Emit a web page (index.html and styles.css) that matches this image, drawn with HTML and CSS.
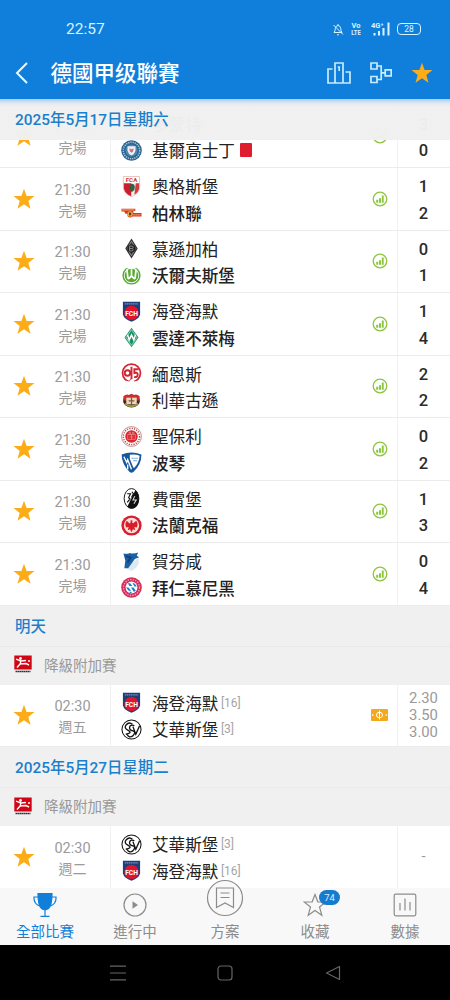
FILE: index.html
```html
<!DOCTYPE html>
<html lang="zh-Hant">

<head>
	<meta charset="UTF-8" />
	<meta name="viewport" content="width=device-width, initial-scale=1.0" />
	<title>德國甲级聯賽</title>
	<link rel="stylesheet" href="styles.css">
</head>

<body>
	<!-- shared icons and crests -->
	<svg class="sprite" aria-hidden="true">
		<symbol id="star" viewBox="0 0 22 22">
			<path d="M11 .8l2.600 7.100 7.900.1-6.200 4.900 2.200 7.900L11 16.200l-6.500 4.600 2.200-7.900L.5 8l7.900-.1z" />
		</symbol>
		<symbol id="stats" viewBox="0 0 16 16">
			<circle cx="8" cy="8" r="6.800" fill="none" stroke="#8cc63f" stroke-width="1.300" />
			<path d="M4.200 8.800h2v3h-2zM7 7.300h2v4.500H7zM9.800 4.400h1.900v7.400H9.800z" fill="#8cc63f" />
		</symbol>
		<symbol id="kiel" viewBox="0 0 22 22">
			<circle cx="11" cy="11" r="10.800" fill="#2b6591" />
			<circle cx="11" cy="11" r="8.600" fill="none" stroke="#a9c8dc" stroke-width="1.600" stroke-dasharray="1.300 1" />
			<circle cx="11" cy="11" r="6.400" fill="#4b86ae" />
			<path d="M6.800 6.600h8.400v4.600q-.8 3.400-4.200 5-3.400-1.600-4.200-5z" fill="#eef0f6" />
			<path d="M8.600 8.600l2.400 1 2.400-1-.8 3.400-1.600 1.400-1.600-1.400z" fill="#d4707f" />
		</symbol>
		<symbol id="dortmund" viewBox="0 0 22 22">
			<circle cx="11" cy="11" r="10" fill="#fde100" />
			<circle cx="11" cy="11" r="6.500" fill="none" stroke="#222" stroke-width="1.200" />
		</symbol>
		<symbol id="augsburg" viewBox="0 0 22 22">
			<path d="M2.500.5h17V13q-1 6-8.500 8.700Q3.500 19 2.500 13z" fill="#fff" stroke="#d8aaa4" stroke-width=".7" />
			<path d="M3 7.500h8V21.300Q4 18.500 3 13z" fill="#c8202d" />
			<path d="M11 7.500h8V13q-1 5.500-8 8.300z" fill="#f3eeee" />
			<path d="M15.500 7.500H19V13q-.8 4-5 6.500z" fill="#d63a3e" />
			<path d="M11 8q3.500 0 3.500 3.500T12.500 16q-1 .8-3 .4l1-2q-3-1-2-4z" fill="#356042" />
			<text x="11" y="6.300" class="crest-text" font-size="6.500" fill="#d5382f">FCA</text>
		</symbol>
		<symbol id="union" viewBox="0 0 22 22">
			<path d="M.5 7.200h14.500v2.300H13v2h8.500v3.800H12q-2.500 2-5 0l-.5-3H4.500L3.500 10H.5z" fill="#d9371f" />
			<path d="M1 8.300h13" stroke="#e9c46b" stroke-width="1" />
			<circle cx="9.500" cy="12.500" r="2.800" fill="#e6b340" />
			<path d="M8.300 11h2.400v3H8.300z" fill="#6b331b" />
			<path d="M13 13.500h7.500" stroke="#f4c2a5" stroke-width="1" stroke-dasharray="1.500 .6" />
		</symbol>
		<symbol id="gladbach" viewBox="0 0 22 22">
			<path d="M11 .5L17.500 11 11 21.500 4.500 11z" fill="#333" />
			<path d="M11 3.500L15.400 11 11 18.500 6.600 11z" fill="none" stroke="#aaa" stroke-width=".8" />
			<circle cx="11" cy="11" r="4.300" fill="#222" />
			<path d="M9 8.500h3q1.700 1.200 0 2.500 1.700 1.300 0 2.500H9zM9 11h3" fill="none" stroke="#999" stroke-width=".9" />
		</symbol>
		<symbol id="wolfsburg" viewBox="0 0 22 22">
			<circle cx="11" cy="11" r="8.800" fill="#fff" stroke="#58aa35" stroke-width="1.500" />
			<circle cx="11" cy="11" r="7.200" fill="#58aa35" />
			<path d="M6.200 4.500l1 9q.4 1.700 1.800 0l2-2 2 2q1.400 1.700 1.800 0l1-9M11 4.500V11" fill="none" stroke="#fff" stroke-width="1.800" />
			<path d="M6.500 1h9v2.700h-9z" fill="#fff" />
		</symbol>
		<symbol id="heidenheim" viewBox="0 0 22 22">
			<path d="M2 .7h18V14q-1 5-9 7.800Q3 19 2 14z" fill="#1c3f7c" />
			<path d="M4 3h14" stroke="#7893bb" stroke-width="1.200" stroke-dasharray="1.600 .6" />
			<circle cx="11" cy="12.500" r="7.500" fill="#e3122f" />
			<text x="11" y="15.200" class="crest-text" font-size="7" fill="#fff">FCH</text>
		</symbol>
		<symbol id="bremen" viewBox="0 0 22 22">
			<path d="M11 .7L18.300 11 11 21.300 3.700 11z" fill="#189064" />
			<path d="M11 2.800L16.700 11 11 19.200 5.300 11z" fill="none" stroke="#d6efe4" stroke-width=".7" />
			<path d="M6.800 8l1.800 5.500L11 8.500l2.400 5L15.200 8" fill="none" stroke="#fff" stroke-width="1.600" />
		</symbol>
		<symbol id="mainz" viewBox="0 0 22 22">
			<circle cx="11" cy="10.500" r="9.400" fill="#fff" stroke="#d32432" stroke-width="1.800" />
			<circle cx="6.800" cy="10.500" r="2.900" fill="none" stroke="#d32432" stroke-width="2" />
			<path d="M11 4v12.500l-2.500 4M18.500 6.500H14v4q3.500-1.200 3.500 1.700t-3.800 2.600" fill="none" stroke="#d32432" stroke-width="2" />
			<path d="M5.500 18.500l3 1 2-2.500h1.500l2 2.500 3-1 2 3.500H3z" fill="#fff" />
		</symbol>
		<symbol id="leverkusen" viewBox="0 0 22 22">
			<ellipse cx="11" cy="11.500" rx="8.800" ry="6.800" fill="#3b2620" />
			<path d="M2.500 6.500Q6 3.500 8.500 5.500L11 4l2.500 1.500q2.500-2 6 1v4.500h-17z" fill="#d32a2b" />
			<path d="M5.500 8h11v7h-11z" fill="#e8d9bd" />
			<path d="M11 7.500v7.500M8 11.500h6" stroke="#8c5138" stroke-width="1.300" />
			<path d="M4 14.500q7 5 14 0" fill="none" stroke="#9d9a44" stroke-width="2" />
		</symbol>
		<symbol id="stpauli" viewBox="0 0 22 22">
			<circle cx="11" cy="11" r="10.400" fill="#fff" stroke="#bc6963" stroke-width=".8" />
			<circle cx="11" cy="11" r="8.500" fill="none" stroke="#a54541" stroke-width="1.500" stroke-dasharray="1.200 1.300" />
			<circle cx="11" cy="11" r="6.500" fill="#da252c" />
			<path d="M7 9h8v5H7zM8.500 9V6.500h1.500V9M12 9V6.500h1.500V9M9 11.500h4M11 9v5" fill="none" stroke="#f3a5a5" stroke-width=".6" />
		</symbol>
		<symbol id="bochum" viewBox="0 0 22 22">
			<path d="M.7 2.500Q11-1.500 21.300 2.500q.5 10-8.300 18.500-2 1.300-4 0Q.5 12.500.7 2.500z" fill="#19579c" />
			<path d="M9.200 3q6-.8 10.300.8-.3 7-5.500 12.700h-1L9.200 7z" fill="#fff" />
			<path d="M3 5l3 6 1-3 4 10M7 13v5" fill="none" stroke="#fff" stroke-width="1.400" />
			<path d="M11 6.500h7M13 9h3.500" stroke="#6e9bc9" stroke-width="1.200" stroke-dasharray="1.500 .5" />
		</symbol>
		<symbol id="freiburg" viewBox="0 0 22 22">
			<ellipse cx="11" cy="11" rx="7.700" ry="10.400" fill="#fff" stroke="#111" stroke-width="1" />
			<path d="M15 2.300q3.700 3 3.700 8.700 0 10.500-7.700 10.500-2.500 0-4.300-2z" fill="#111" />
			<path d="M6.500 6H10l-2 4 1.500 1.500L6.500 15M11.500 4l1.500 2-2 4" fill="none" stroke="#111" stroke-width="1.200" />
			<path d="M14.500 8.500l-2 4h3.500l-2.500 4" fill="none" stroke="#ddd" stroke-width="1.100" />
		</symbol>
		<symbol id="frankfurt" viewBox="0 0 22 22">
			<circle cx="11" cy="11" r="10.600" fill="#d71e2b" />
			<circle cx="11" cy="11" r="8" fill="#fbdede" />
			<path d="M10 5.500l2 .3-.3 2 1.100.9L16 6q2.500 4 .5 7L14 12.500l1 3.500-2.500-1-1.500 3-1.500-3L7 16l1-3.500-2.500.5Q3.500 10 6 6l3 3 1-1z" fill="#d71e2b" />
		</symbol>
		<symbol id="hoffenheim" viewBox="0 0 22 22">
			<path d="M18.500 7v6q-2 5-7.500 8-4-1.500-5.500-4z" fill="#dce8f2" />
			<path d="M2.500 2.500q4 1 6.500-.5 4 1.500 9-.5l-1.500 3.500 2.500 1.500-4.500 2-7 9.500H3.500L4.500 10z" fill="#1961a5" />
			<path d="M5 5.500l5 1.500-3 5" fill="none" stroke="#11427b" stroke-width="2" />
		</symbol>
		<symbol id="bayern" viewBox="0 0 22 22">
			<circle cx="11" cy="11" r="10.800" fill="#d52b58" />
			<circle cx="11" cy="11" r="8.400" fill="none" stroke="#f0a0b7" stroke-width="1.400" stroke-dasharray="1.500 1.200" />
			<circle cx="11" cy="11" r="6.200" fill="#fff" />
			<path d="M7 6.500h2.500l2.500 3H9zM12 6l2.500 1 2 3h-2.500zM5.200 11h2.500l3 3.500H8zM10.500 11H13l2.500 3.200-2 1.500zM8.500 15.500h2l1 1.300-2-.1z" fill="#197fc6" />
		</symbol>
		<symbol id="elversberg" viewBox="0 0 22 22">
			<circle cx="11" cy="11" r="10" fill="#fff" stroke="#111" stroke-width="1.100" />
			<path d="M12 5.500Q8.500 2.500 5.500 6t2 6-2.500 4M14 7Q9.500 5.500 9 8.500t3.500 4-.5 5.500Q8.500 20 6.500 16.500M12.500 8l3 8L19.500 7" fill="none" stroke="#111" stroke-width="1.400" />
		</symbol>
		<symbol id="bundesliga" viewBox="0 0 18 18">
			<path d="M.3.500h17.400v14H.3z" fill="#d20515" />
			<circle cx="6.500" cy="3.500" r="1.400" fill="#fff" />
			<path d="M2 4.200l5 1.800 5-.5M6.500 5.500v3.500l5.500-.5 3 1.500M6.500 8.500L3 12.500" fill="none" stroke="#fff" stroke-width="1.400" />
			<circle cx="15" cy="6" r="1" fill="#fff" />
			<path d="M1.500 16.500h15" stroke="#333" stroke-width="1.400" stroke-dasharray="1.700 .3" />
		</symbol>
	</svg>

	<div class="app">
		<header class="header">
			<div class="status-bar">
				<span class="clock">22:57</span>
				<div class="status-icons">
					<svg class="bell" width="12" height="13" viewBox="0 0 12 13">
						<path d="M2 9.500Q3.300 8 3.300 5.500 3.800 2.500 6 2.500t2.700 3q0 2.500 1.300 4zM6 1v1.500M5 11.800h2M1.500 2l9.500 9.500" />
					</svg>
					<svg class="volte" width="10" height="14" viewBox="0 0 10 14">
						<text x="5" y="6.300">Vo</text>
						<text x="5" y="13" textLength="9.500" lengthAdjust="spacingAndGlyphs">LTE</text>
					</svg>
					<svg class="signal" width="20" height="14" viewBox="0 0 20 14">
						<text x="0" y="6" font-size="7.500">4G⁺</text>
						<path d="M3.500 11v2.500M8 9v4.500M12.500 6v7.500M17.500.5v13" />
					</svg>
					<span class="battery">28</span>
				</div>
			</div>
			<div class="title-bar">
				<svg class="back" width="14" height="22" viewBox="0 0 14 22">
					<path d="M12 1L2 11l10 10" />
				</svg>
				<h1>德國甲级聯賽</h1>
				<svg class="tool" width="24" height="22" viewBox="0 0 24 22">
					<path d="M5.500 7H1v14h22V10h-4.500M8 21V1h8v20M10.700 5h1.500v4" />
				</svg>
				<svg class="tool" width="22" height="22" viewBox="0 0 22 22">
					<path d="M1 1h6v6H1zM1 14.500h6v6H1zM15.200 7.800h6v6h-6zM7 4h4.200v13.500H7M11.200 10.800h4" />
				</svg>
				<svg class="star" width="22" height="22"><use href="#star" /></svg>
			</div>
		</header>

		<main class="list">
			<div class="date-bar sticky">2025年5月17日星期六</div>

			<div class="match first">
				<svg class="star"><use href="#star" /></svg>
				<div class="time">21:30<span>完場</span></div>
				<div class="teams">
					<div class="team win"><svg><use href="#dortmund" /></svg>多蒙特</div>
					<div class="team"><svg><use href="#kiel" /></svg>基爾高士丁<i class="red-card"></i></div>
				</div>
				<svg class="stats"><use href="#stats" /></svg>
				<div class="score"><b>3</b><b>0</b></div>
			</div>
			<div class="match">
				<svg class="star"><use href="#star" /></svg>
				<div class="time">21:30<span>完場</span></div>
				<div class="teams">
					<div class="team"><svg><use href="#augsburg" /></svg>奧格斯堡</div>
					<div class="team win"><svg><use href="#union" /></svg>柏林聯</div>
				</div>
				<svg class="stats"><use href="#stats" /></svg>
				<div class="score"><b>1</b><b>2</b></div>
			</div>
			<div class="match">
				<svg class="star"><use href="#star" /></svg>
				<div class="time">21:30<span>完場</span></div>
				<div class="teams">
					<div class="team"><svg><use href="#gladbach" /></svg>慕遜加柏</div>
					<div class="team win"><svg><use href="#wolfsburg" /></svg>沃爾夫斯堡</div>
				</div>
				<svg class="stats"><use href="#stats" /></svg>
				<div class="score"><b>0</b><b>1</b></div>
			</div>
			<div class="match">
				<svg class="star"><use href="#star" /></svg>
				<div class="time">21:30<span>完場</span></div>
				<div class="teams">
					<div class="team"><svg><use href="#heidenheim" /></svg>海登海默</div>
					<div class="team win"><svg><use href="#bremen" /></svg>雲達不萊梅</div>
				</div>
				<svg class="stats"><use href="#stats" /></svg>
				<div class="score"><b>1</b><b>4</b></div>
			</div>
			<div class="match">
				<svg class="star"><use href="#star" /></svg>
				<div class="time">21:30<span>完場</span></div>
				<div class="teams">
					<div class="team"><svg><use href="#mainz" /></svg>緬恩斯</div>
					<div class="team"><svg><use href="#leverkusen" /></svg>利華古遜</div>
				</div>
				<svg class="stats"><use href="#stats" /></svg>
				<div class="score"><b>2</b><b>2</b></div>
			</div>
			<div class="match">
				<svg class="star"><use href="#star" /></svg>
				<div class="time">21:30<span>完場</span></div>
				<div class="teams">
					<div class="team"><svg><use href="#stpauli" /></svg>聖保利</div>
					<div class="team win"><svg><use href="#bochum" /></svg>波琴</div>
				</div>
				<svg class="stats"><use href="#stats" /></svg>
				<div class="score"><b>0</b><b>2</b></div>
			</div>
			<div class="match">
				<svg class="star"><use href="#star" /></svg>
				<div class="time">21:30<span>完場</span></div>
				<div class="teams">
					<div class="team"><svg><use href="#freiburg" /></svg>費雷堡</div>
					<div class="team win"><svg><use href="#frankfurt" /></svg>法蘭克福</div>
				</div>
				<svg class="stats"><use href="#stats" /></svg>
				<div class="score"><b>1</b><b>3</b></div>
			</div>
			<div class="match">
				<svg class="star"><use href="#star" /></svg>
				<div class="time">21:30<span>完場</span></div>
				<div class="teams">
					<div class="team"><svg><use href="#hoffenheim" /></svg>賀芬咸</div>
					<div class="team win"><svg><use href="#bayern" /></svg>拜仁慕尼黑</div>
				</div>
				<svg class="stats"><use href="#stats" /></svg>
				<div class="score"><b>0</b><b>4</b></div>
			</div>

			<div class="date-bar">明天</div>
			<div class="league"><svg><use href="#bundesliga" /></svg>降級附加賽</div>
			<div class="match">
				<svg class="star"><use href="#star" /></svg>
				<div class="time">02:30<span>週五</span></div>
				<div class="teams">
					<div class="team"><svg><use href="#heidenheim" /></svg>海登海默<small>[16]</small></div>
					<div class="team"><svg><use href="#elversberg" /></svg>艾華斯堡<small>[3]</small></div>
				</div>
				<svg class="tip" viewBox="0 0 17 12">
					<rect width="17" height="12" rx="1" fill="#f2a91c" />
					<path d="M8.500 1.500v9M8.500 3.200q-3 0-3 2.800t3 2.800 3-2.800-3-2.800M2.300 5l-1 1 1 1M14.700 5l1 1-1 1" fill="none" stroke="#fff" stroke-width="1" />
				</svg>
				<div class="odds">2.30<br>3.50<br>3.00</div>
			</div>

			<div class="date-bar">2025年5月27日星期二</div>
			<div class="league"><svg><use href="#bundesliga" /></svg>降級附加賽</div>
			<div class="match">
				<svg class="star"><use href="#star" /></svg>
				<div class="time">02:30<span>週二</span></div>
				<div class="teams">
					<div class="team"><svg><use href="#elversberg" /></svg>艾華斯堡<small>[3]</small></div>
					<div class="team"><svg><use href="#heidenheim" /></svg>海登海默<small>[16]</small></div>
				</div>
				<span></span>
				<div class="odds">-</div>
			</div>
		</main>

		<nav class="tabs">
			<a class="tab active">
				<svg width="24" height="24" viewBox="0 0 24 24">
					<path d="M5 .5h14q0 12-3.500 15-3.500 2.500-7 0Q5 12.500 5 .5z" fill="currentColor" />
					<path d="M5 4H1q-.5 6.500 5.500 9M19 4h4q.5 6.500-5.500 9M12 16v7M7.500 23.300h9" />
				</svg>
				全部比賽
			</a>
			<a class="tab">
				<svg width="24" height="24" viewBox="0 0 24 24">
					<circle cx="12" cy="12" r="11" />
					<path d="M9.500 8.300v7.400l5.500-3.700z" fill="currentColor" stroke="none" />
				</svg>
				進行中
			</a>
			<a class="tab plan">
				<svg width="38" height="38" viewBox="0 0 38 38">
					<circle cx="19" cy="19" r="17.500" fill="#f8f8f8" />
					<path d="M10.500 9h17v19.500L19 24l-8.500 4.500zM14.500 14h9M14.500 18.500h9" />
				</svg>
				方案
			</a>
			<a class="tab">
				<svg width="24" height="24" viewBox="0 0 24 24">
					<path d="M12 1.500l2.800 7.300 8 .2-6.300 5 2.300 8.200-6.800-4.700-6.800 4.700L7.500 14 1.200 9l8-.2z" />
				</svg>
				<span class="badge">74</span>
				收藏
			</a>
			<a class="tab">
				<svg width="24" height="24" viewBox="0 0 24 24">
					<rect x="1.200" y="1.200" width="21.600" height="21.600" rx="1.500" />
					<path d="M7 10v7.500M12 5.500v12M17 9v8.500" />
				</svg>
				數據
			</a>
		</nav>

		<footer class="system-nav">
			<svg width="16" height="16" viewBox="0 0 16 16"><path d="M0 1.200h16M0 8h16M0 14.800h16" /></svg>
			<svg width="16" height="16" viewBox="0 0 16 16"><rect x="1" y="1" width="14" height="14" rx="3" /></svg>
			<svg width="16" height="16" viewBox="0 0 16 16"><path d="M14.500 1.500v13L1.500 8z" /></svg>
		</footer>
	</div>
</body>

</html>
```
FILE: styles.css
```css
* {
	box-sizing: border-box;
}

body {
	margin: 0;
	background: #000;
	font-family: Roboto, "Noto Sans CJK TC", sans-serif;
}

.sprite {
	position: absolute;
	width: 0;
	height: 0;
}

.crest-text {
	font-family: Roboto, sans-serif;
	font-weight: 700;
	text-anchor: middle;
}

.app {
	display: flex;
	flex-direction: column;
	width: 450px;
	height: 1000px;
	overflow: hidden;
	background: #fff;
}

/* header */
.header {
	height: 99px;
	background: #107fdb;
	color: #fff;
	flex-shrink: 0;
}

.status-bar {
	display: flex;
	justify-content: space-between;
	align-items: center;
	height: 48px;
	padding: 10px 29px 0 66px;
	color: #d9f3ff;
}

.clock {
	font-size: 15.5px;
}

.status-icons {
	display: flex;
	align-items: center;
}

.status-icons svg {
	fill: none;
	stroke: #d9f3ff;
}

.bell {
	margin-right: 7px;
}

.volte {
	margin-right: 10px;
}

.volte text {
	fill: #d9f3ff;
	stroke: none;
	font-size: 7.5px;
	font-weight: 700;
	text-anchor: middle;
}

.signal {
	margin-right: 6px;
	stroke-width: 2;
}

.signal text {
	fill: #d9f3ff;
	stroke: none;
	font-weight: 700;
}

.battery {
	width: 24px;
	height: 12px;
	border: 1.5px solid #d9f3ff;
	border-radius: 4px;
	font-size: 8.5px;
	line-height: 10px;
	text-align: center;
}

.title-bar {
	display: flex;
	align-items: center;
	height: 50px;
	padding: 0 17px 0 15px;
}

.title-bar h1 {
	flex: 1;
	margin: 0 0 3px 21.5px;
	font-size: 21.5px;
	font-weight: 500;
}

.back,
.tool {
	fill: none;
	stroke: #eaf8ff;
	stroke-width: 2;
}

.tool {
	margin-right: 19px;
	stroke: #c9ecff;
	stroke-width: 1.7;
}

.star {
	width: 22px;
	height: 22px;
	fill: #fcac17;
}

/* match list */
.list {
	position: relative;
	height: 789px;
	padding-top: 6.5px;
	overflow: hidden;
	flex-shrink: 0;
}

.date-bar {
	height: 41px;
	padding: 1px 0 0 15px;
	background: #f0f0f0;
	border-bottom: 1px solid #e9e9e9;
	color: #1a7fcb;
	font-size: 15.4px;
	font-weight: 500;
	line-height: 41px;
}

.sticky {
	position: absolute;
	top: 0;
	left: 0;
	right: 0;
	background: linear-gradient(#a9cdef 0, #dfe8f1 4px, rgba(240, 240, 240, 0.98) 8px);
	border: none;
}

.league {
	display: flex;
	align-items: center;
	gap: 12px;
	height: 38px;
	padding: 0 0 3px 14px;
	background: #f0f0f0;
	color: #999;
	font-size: 14.5px;
}

.league svg {
	width: 18px;
	height: 18px;
}

.match {
	display: grid;
	grid-template-columns: 48px 62px 1fr 35px 53px;
	align-items: center;
	justify-items: center;
	height: 62.5px;
	border-bottom: 1px solid #ececec;
}

.time {
	justify-self: stretch;
	padding-top: 4px;
	padding-right: 13px;
	color: #9b9b9b;
	font-size: 14.5px;
	line-height: 20px;
	text-align: center;
}

.time span {
	display: block;
	font-size: 14px;
}

.teams {
	justify-self: stretch;
	height: 100%;
	padding: 5px 0 0 10px;
	border-left: 1px solid #f1f1f1;
}

.team {
	display: flex;
	align-items: center;
	height: 26.5px;
	color: #222;
	font-size: 16.6px;
	white-space: nowrap;
}

.team svg {
	width: 21px;
	height: 21px;
	margin-right: 10px;
}

.team small {
	margin-left: 2.5px;
	color: #a5a5a5;
	font-size: 12px;
}

.win {
	font-weight: 500;
}

.red-card {
	width: 12px;
	height: 14px;
	margin-left: 5px;
	border-radius: 1px;
	background: #e01d2c;
}

.stats {
	width: 16px;
	height: 16px;
}

.tip {
	width: 17px;
	height: 12px;
}

.score,
.odds {
	justify-self: stretch;
	height: 100%;
	padding-right: 1px;
	border-left: 1px solid #f1f1f1;
	text-align: center;
}

.score {
	padding-top: 5px;
}

.score b {
	display: block;
	height: 26.5px;
	color: #2b2b2b;
	font-size: 16.5px;
	font-weight: 500;
	line-height: 27px;
}

.odds {
	display: flex;
	align-items: center;
	justify-content: center;
	color: #999;
	font-size: 14.8px;
	line-height: 17px;
}

/* bottom tabs */
.tabs {
	display: flex;
	height: 57px;
	background: #f8f8f8;
	flex-shrink: 0;
}

.tab {
	position: relative;
	display: flex;
	flex: 1;
	flex-direction: column;
	align-items: center;
	padding-top: 5px;
	color: #8c8c8c;
	font-size: 14.5px;
	line-height: 20px;
}

.tab svg {
	margin-bottom: 6px;
	fill: none;
	stroke: currentColor;
	stroke-width: 1.2;
}

.active {
	color: #0f7fd9;
}

.plan svg {
	margin-top: -14px;
}

.badge {
	position: absolute;
	top: 2px;
	left: 49px;
	width: 21px;
	height: 15px;
	border-radius: 8px;
	background: #167bcd;
	color: #d9f0ff;
	font-size: 9.5px;
	line-height: 15px;
	text-align: center;
}

/* android navigation */
.system-nav {
	display: flex;
	justify-content: center;
	align-items: center;
	gap: 91.5px;
	height: 55px;
	background: #000;
	flex-shrink: 0;
}

.system-nav svg {
	fill: none;
	stroke: #666;
	stroke-width: 1.2;
	stroke-linejoin: round;
}
```
